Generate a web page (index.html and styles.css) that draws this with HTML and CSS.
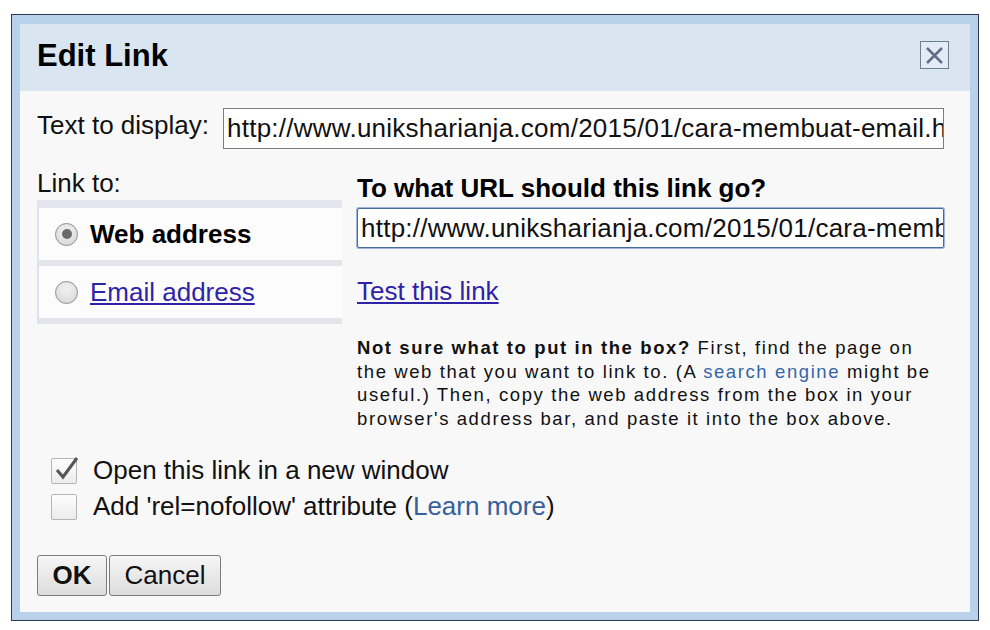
FILE: index.html
```html
<!DOCTYPE html>
<html lang="en">
<head>
    <meta charset="UTF-8">
    <title>Edit Link</title>
    <link rel="stylesheet" href="styles.css">
</head>
<body>
    <div class="dialog">
        <div class="dialog-title">
            <h1>Edit Link</h1>
            <span class="close-btn">
                <svg width="19" height="19" viewBox="0 0 19 19">
                    <path d="M2 2 L17 17 M17 2 L2 17" stroke="#5f6f86" stroke-width="2.6" fill="none"/>
                </svg>
            </span>
        </div>

        <div class="dialog-body">
            <div class="display-row">
                <label class="field-label">Text to display:</label>
                <div class="text-input">http://www.uniksharianja.com/2015/01/cara-membuat-email.html</div>
            </div>

            <div class="link-section">
                <div class="link-left">
                    <div class="field-label">Link to:</div>
                    <div class="link-types">
                        <div class="link-type">
                            <span class="radio checked"></span>
                            <span class="type-name">Web address</span>
                        </div>
                        <div class="link-type">
                            <span class="radio"></span>
                            <a class="type-link" href="#">Email address</a>
                        </div>
                    </div>
                </div>

                <div class="link-right">
                    <div class="url-title">To what URL should this link go?</div>
                    <div class="text-input focused">http://www.uniksharianja.com/2015/01/cara-membuat-email.html</div>
                    <a class="test-link" href="#">Test this link</a>
                    <p class="help">
                        <b>Not sure what to put in the box?</b> First, find the page on the web that you want to link to. (A <a href="#">search engine</a> might be useful.) Then, copy the web address from the box in your browser's address bar, and paste it into the box above.
                    </p>
                </div>
            </div>

            <div class="options">
                <div class="option">
                    <span class="checkbox">
                        <svg width="28" height="28" viewBox="0 0 28 28">
                            <path d="M5 13 L11 20 L25 1" stroke="#555" stroke-width="3" fill="none"/>
                        </svg>
                    </span>
                    <span>Open this link in a new window</span>
                </div>
                <div class="option">
                    <span class="checkbox"></span>
                    <span>Add 'rel=nofollow' attribute (<a href="#">Learn more</a>)</span>
                </div>
            </div>

            <div class="buttons">
                <button class="button ok">OK</button>
                <button class="button">Cancel</button>
            </div>
        </div>
    </div>
</body>
</html>
```

FILE: styles.css
```css
body {
    margin: 0;
    background-color: #fff;
    font-family: "Liberation Sans", Arial, sans-serif;
    color: #111;
}

.dialog {
    width: 968px;
    height: 607px;
    box-sizing: border-box;
    margin: 14px 0 0 11px;
    border: 1px solid #2d3b4b;
    background-color: #b9d1ea;
    padding: 9px 8px 8px 8px;
    display: flex;
    flex-direction: column;
}

.dialog-title {
    height: 67px;
    flex-shrink: 0;
    background-color: #d9e5f1;
    display: flex;
    justify-content: space-between;
    align-items: flex-start;
    padding: 0 21px 0 17px;
}

.dialog-title h1 {
    margin: 14px 0 0 0;
    font-size: 31px;
    font-weight: bold;
    color: #000;
}

.close-btn {
    margin-top: 17px;
    width: 27px;
    height: 26px;
    border: 1px solid #6f7f92;
    background-color: #e3ecf6;
    display: flex;
    align-items: center;
    justify-content: center;
}

.dialog-body {
    flex: 1;
    background-color: #f8f8f8;
    padding: 17px 26px 0 17px;
    font-size: 26px;
}

.display-row {
    display: flex;
    align-items: center;
    gap: 14px;
}

.field-label {
    line-height: 30px;
}

.display-row .field-label {
    margin-top: -8px;
}

.text-input {
    flex: 1;
    min-width: 0;
    height: 39px;
    line-height: 39px;
    padding: 0 3px;
    border: 1px solid #7d7d7d;
    background-color: #fff;
    white-space: nowrap;
    overflow: hidden;
    letter-spacing: 0.25px;
    color: #111;
}

.text-input.focused {
    border: 1px solid #4a6b9e;
    box-shadow: 0 0 0 1px #9fb8d8;
    border-radius: 2px;
    height: 38px;
    line-height: 38px;
}

.link-section {
    display: flex;
    gap: 15px;
    margin-top: 19px;
}

.link-left {
    flex: 0 0 305px;
}

.link-types {
    margin-top: 2px;
    border-top: 8px solid #e4e5ee;
    border-left: 2px solid #e1e2ea;
}

.link-type {
    height: 52px;
    background-color: #fcfcfc;
    border-bottom: 6px solid #e3e4ec;
    display: flex;
    align-items: center;
}

.radio {
    flex-shrink: 0;
    width: 21px;
    height: 21px;
    margin-left: 16px;
    border: 1px solid #8e8e8e;
    border-radius: 50%;
    background: radial-gradient(circle at 50% 35%, #f2f2f2, #d4d4d4);
    display: flex;
    align-items: center;
    justify-content: center;
}

.radio.checked::after {
    content: "";
    width: 10px;
    height: 10px;
    border-radius: 50%;
    background-color: #6a6a6a;
}

.type-name {
    margin-left: 12px;
    font-weight: bold;
    white-space: nowrap;
    color: #000;
}

.type-link {
    margin-left: 12px;
    white-space: nowrap;
    color: #2e23a8;
}

.link-right {
    flex: 1;
    min-width: 0;
    padding-top: 5px;
}

.url-title {
    font-weight: bold;
    line-height: 30px;
    color: #000;
}

.link-right .text-input {
    margin-top: 5px;
}

.test-link {
    display: inline-block;
    margin-top: 28px;
    line-height: 30px;
    color: #2e23a8;
}

.help {
    margin: 29px 0 0 0;
    width: 578px;
    font-size: 18.5px;
    line-height: 23.7px;
    letter-spacing: 1.6px;
    color: #111;
}

.help a {
    color: #3566a8;
    text-decoration: none;
}

.options {
    margin-top: 22px;
    padding-left: 14px;
}

.option {
    display: flex;
    align-items: center;
    height: 36px;
    gap: 16px;
}

.option a {
    color: #36609c;
    text-decoration: none;
}

.checkbox {
    position: relative;
    width: 24px;
    height: 24px;
    border: 1px solid #b5b5b5;
    border-radius: 2px;
    background: linear-gradient(#fdfdfd, #ececec);
}

.checkbox svg {
    position: absolute;
    left: 0;
    top: -2px;
}

.buttons {
    margin-top: 30px;
    display: flex;
    gap: 2px;
}

.button {
    height: 41px;
    padding: 0 14px;
    font-family: "Liberation Sans", Arial, sans-serif;
    font-size: 26px;
    color: #111;
    border: 1px solid #7c7c7c;
    border-radius: 3px;
    background: linear-gradient(#f6f6f6, #dcdcdc);
}

.button.ok {
    width: 70px;
    font-weight: bold;
}

.button + .button {
    width: 112px;
}
```
